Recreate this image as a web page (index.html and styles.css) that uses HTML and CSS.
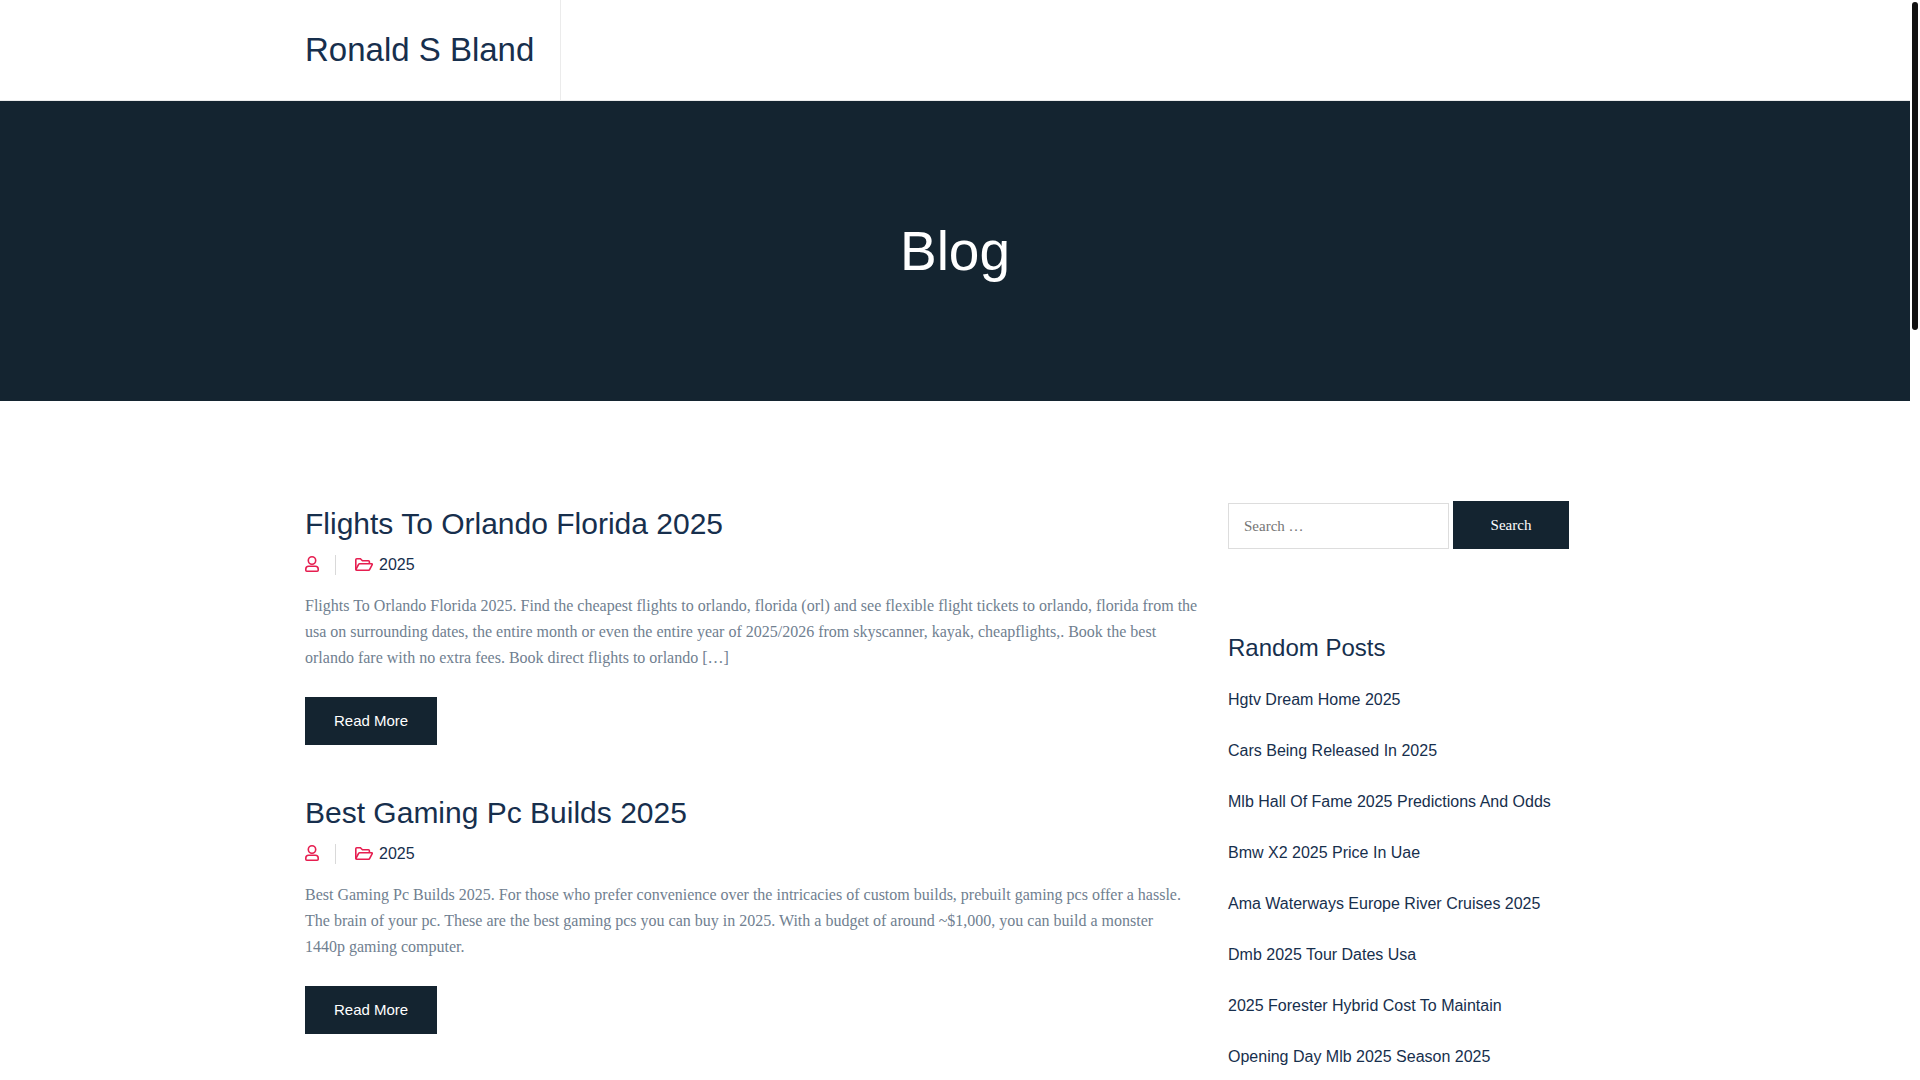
FILE: index.html
```
<!DOCTYPE html>
<html lang="en">
<head>
	<meta charset="utf-8">
	<meta name="viewport" content="width=device-width, initial-scale=1">
	<title>Blog - Ronald S Bland</title>

	<link rel="stylesheet" href="styles.css">
</head>
<body>

	<!-- icons used in the post meta -->
	<svg class="sprite" aria-hidden="true">
		<symbol id="icon-user" viewBox="0 0 14 16">
			<circle cx="7" cy="4.500" r="3.700"/>
			<path d="M3.600 10.300h6.800c1.600 0 2.800 1.200 2.800 2.800v1.100c0 .6-.4 1-1 1H1.800c-.6 0-1-.4-1-1v-1.100c0-1.600 1.200-2.800 2.800-2.800z"/>
		</symbol>
		<symbol id="icon-folder" viewBox="0 0 18 13">
			<path d="M1.200 11.800C.9 11.600.8 11.400.8 11V1.800c0-.6.4-1 1-1h3.600l2 2h6c.6 0 1 .4 1 1v1.900"/>
			<path d="M4.700 5.700h11.900c.6 0 .9.500.6 1l-2.500 4.700c-.2.500-.6.800-1.100.8H1.700c-.6 0-.9-.5-.6-1l2.500-4.700c.2-.5.600-.8 1.100-.8z"/>
		</symbol>
	</svg>

	<header class="header">
		<div class="container">
			<a class="logo" href="#">Ronald S Bland</a>
		</div>
	</header>

	<section class="banner">
		<h1>Blog</h1>
	</section>

	<div class="container content">
		<main class="posts">
			<article class="post">
				<h2><a href="#">Flights To Orlando Florida 2025</a></h2>
				<ul class="meta">
					<li><svg class="icon-user"><use href="#icon-user"/></svg></li>
					<li><svg class="icon-folder"><use href="#icon-folder"/></svg><a href="#">2025</a></li>
				</ul>
				<p>Flights To Orlando Florida 2025. Find the cheapest flights to orlando, florida (orl) and see flexible flight tickets to orlando, florida from the usa on surrounding dates, the entire month or even the entire year of 2025/2026 from skyscanner, kayak, cheapflights,. Book the best orlando fare with no extra fees. Book direct flights to orlando […]</p>
				<a class="read-more" href="#">Read More</a>
			</article>

			<article class="post">
				<h2><a href="#">Best Gaming Pc Builds 2025</a></h2>
				<ul class="meta">
					<li><svg class="icon-user"><use href="#icon-user"/></svg></li>
					<li><svg class="icon-folder"><use href="#icon-folder"/></svg><a href="#">2025</a></li>
				</ul>
				<p>Best Gaming Pc Builds 2025. For those who prefer convenience over the intricacies of custom builds, prebuilt gaming pcs offer a hassle. The brain of your pc. These are the best gaming pcs you can buy in 2025. With a budget of around ~$1,000, you can build a monster<br>1440p gaming computer.</p>
				<a class="read-more" href="#">Read More</a>
			</article>
		</main>

		<aside class="sidebar">
			<form class="search">
				<input type="search" placeholder="Search …" aria-label="Search">
				<button type="submit">Search</button>
			</form>

			<h3>Random Posts</h3>
			<ul class="links">
				<li><a href="#">Hgtv Dream Home 2025</a></li>
				<li><a href="#">Cars Being Released In 2025</a></li>
				<li><a href="#">Mlb Hall Of Fame 2025 Predictions And Odds</a></li>
				<li><a href="#">Bmw X2 2025 Price In Uae</a></li>
				<li><a href="#">Ama Waterways Europe River Cruises 2025</a></li>
				<li><a href="#">Dmb 2025 Tour Dates Usa</a></li>
				<li><a href="#">2025 Forester Hybrid Cost To Maintain</a></li>
				<li><a href="#">Opening Day Mlb 2025 Season 2025</a></li>
			</ul>
		</aside>
	</div>

	<div class="scroll-thumb"></div>

</body>
</html>
```
FILE: styles.css
```
* {
	margin: 0;
	padding: 0;
	box-sizing: border-box;
}

body {
	padding-right: 10px;
	background-color: #fff;
	color: #708090;
	font-family: "Liberation Serif", serif;
	font-size: 16px;
	line-height: 26px;
}

h1, h2, h3 {
	font-family: "Liberation Sans", sans-serif;
	font-weight: 400;
	color: #172f4d;
}

a {
	color: #172f4d;
	font-family: "Liberation Sans", sans-serif;
	text-decoration: none;
}

ul {
	list-style: none;
}

.sprite {
	display: none;
}

.container {
	width: 90%;
	max-width: 1300px;
	margin: 0 auto;
}

.header {
	border-bottom: 1px solid #ebebeb;
}

.logo {
	display: inline-block;
	padding-right: 26px;
	border-right: 1px solid #ebebeb;
	font-size: 33px;
	line-height: 100px;
	vertical-align: top;
}

.banner {
	height: 300px;
	display: flex;
	align-items: center;
	justify-content: center;
	background-color: #142430;
}

.banner h1 {
	color: #fff;
	font-size: 55px;
	line-height: 66px;
}

.content {
	display: grid;
	grid-template-columns: minmax(0, 1fr) 377px;
	gap: 24px;
	padding-top: 100px;
}

.post {
	margin-bottom: 45px;
}

.post h2 {
	font-size: 30px;
	line-height: 46px;
}

.meta {
	display: flex;
	align-items: center;
	margin: 8px 0 18px;
}

.meta li {
	display: flex;
	align-items: center;
	height: 20px;
}

.meta li + li {
	margin-left: 16px;
	padding-left: 19px;
	border-left: 1px solid #d9d9d9;
}

.meta svg {
	margin-bottom: 2px;
	fill: none;
	stroke: #e61e50;
	stroke-width: 1.6;
}

.icon-user {
	width: 14px;
	height: 16px;
}

.icon-folder {
	width: 18px;
	height: 13px;
	margin-right: 6px;
}

.read-more {
	display: inline-block;
	margin-top: 26px;
	padding: 0 29px;
	background-color: #142430;
	color: #fff;
	font-size: 15px;
	line-height: 48px;
	vertical-align: top;
}

.search {
	display: flex;
	align-items: flex-end;
	gap: 4px;
	margin-bottom: 81px;
}

.search input {
	width: 221px;
	height: 46px;
	padding: 0 15px;
	border: 1px solid #ddd;
	font-family: inherit;
	font-size: 15px;
	outline: none;
}

.search input::placeholder {
	color: #757575;
}

.search button {
	width: 116px;
	height: 48px;
	border: none;
	background-color: #142430;
	color: #fff;
	font-family: inherit;
	font-size: 15px;
	cursor: pointer;
}

.sidebar h3 {
	margin-bottom: 21px;
	font-size: 24px;
	line-height: 36px;
}

.links {
	display: grid;
	gap: 25px;
}

.scroll-thumb {
	position: fixed;
	top: 2px;
	right: 2px;
	width: 6px;
	height: 328px;
	border-radius: 3px;
	background-color: #111;
}
```
